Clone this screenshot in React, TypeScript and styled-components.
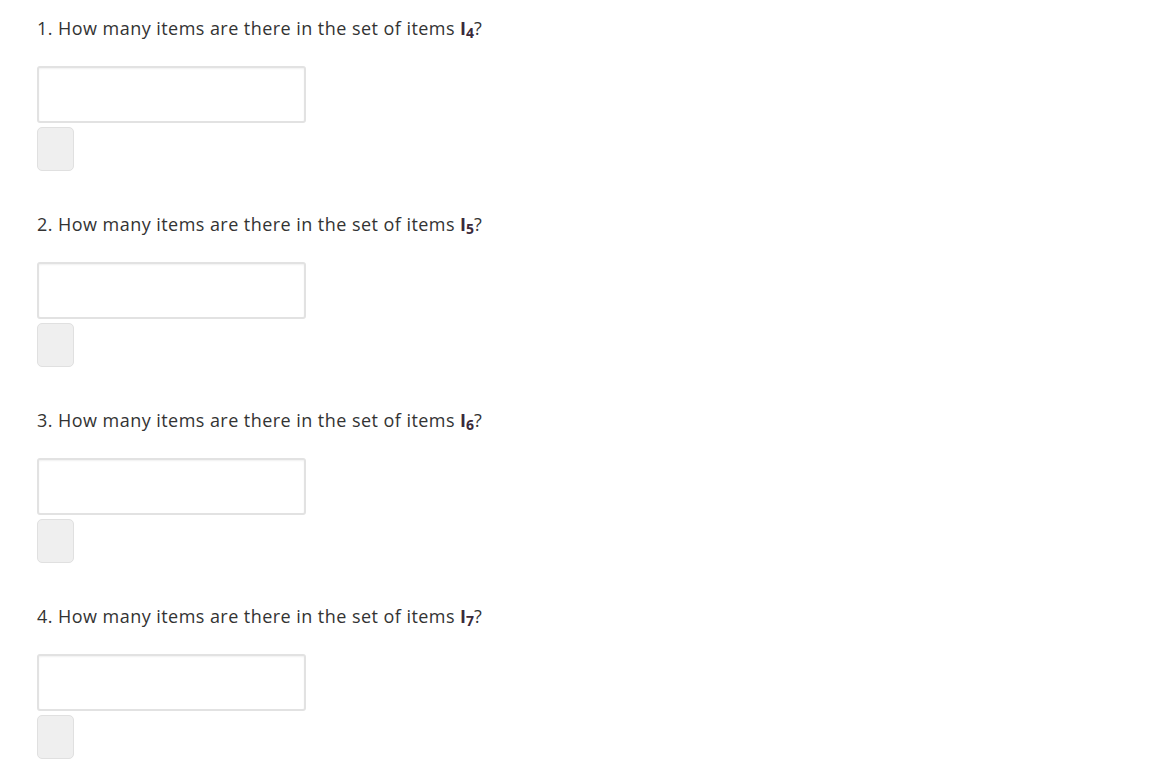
import { createGlobalStyle } from 'styled-components'
import styled from 'styled-components'

const GlobalStyle = createGlobalStyle`
  html, body {
    margin: 0;
    padding: 0;
    background: #fff;
  }
  body {
    font-family: "Open Sans", "Noto Sans", sans-serif;
    color: #333;
  }
`

const StyledPage = styled.div`
  display: flex;
  flex-direction: column;
  padding: 15px 0 0 37px;
`

const StyledQuestion = styled.div`
  display: flex;
  flex-direction: column;
  align-items: flex-start;
  height: 196px;
`

const StyledPrompt = styled.p`
  margin: 0 0 25px;
  font-size: 18px;
  line-height: 26px;
  letter-spacing: 0.45px;
  color: #333;
`

const StyledVar = styled.b`
  font-weight: 700;
  color: #3a2a3a;
  letter-spacing: 0;

  sub {
    font-size: 14px;
    line-height: 0;
    vertical-align: -3px;
  }
`

const StyledInput = styled.input`
  box-sizing: border-box;
  width: 269px;
  height: 57px;
  margin: 0;
  border: 2px solid #e2e2e2;
  border-radius: 3px;
  box-shadow: inset 0 1px 2px rgba(0, 0, 0, 0.06);
  background: #fff;
  outline: none;
`

const StyledButton = styled.button`
  box-sizing: border-box;
  width: 37px;
  height: 44px;
  margin-top: 4px;
  padding: 0;
  border: 1px solid #e0e0e0;
  border-radius: 5px;
  background: #efefef;
`

const questions = [4, 5, 6, 7]

export default function App() {
  return (
    <>
      <GlobalStyle />
      <StyledPage>
        {questions.map((n, i) => (
          <StyledQuestion key={n}>
            <StyledPrompt>
              {i + 1}. How many items are there in the set of items{' '}
              <StyledVar>
                I<sub>{n}</sub>
              </StyledVar>
              ?
            </StyledPrompt>
            <StyledInput type="text" />
            <StyledButton type="button" />
          </StyledQuestion>
        ))}
      </StyledPage>
    </>
  )
}
